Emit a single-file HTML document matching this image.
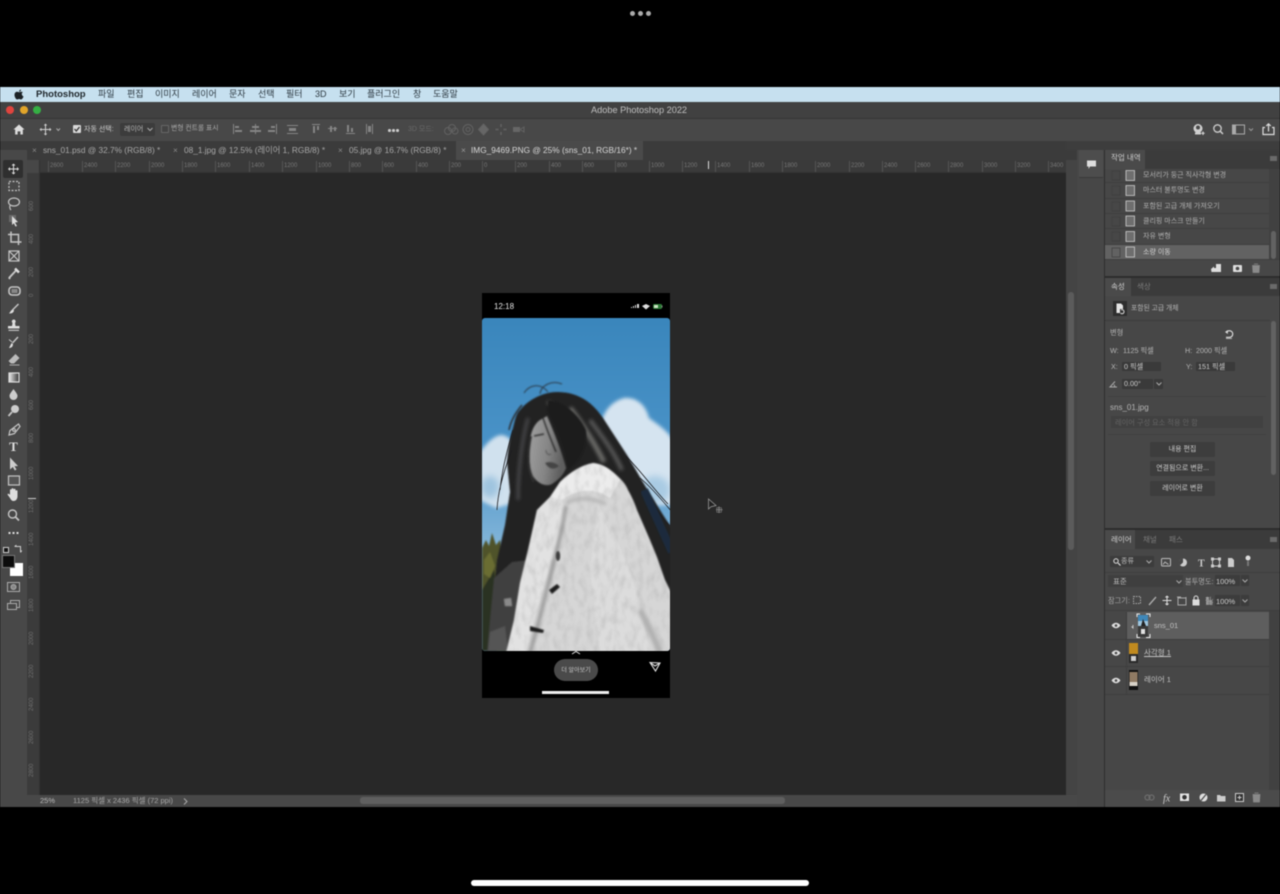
<!DOCTYPE html>
<html lang="ko">
<head>
<meta charset="utf-8">
<title>Adobe Photoshop 2022</title>
<style>
html,body{margin:0;padding:0;background:#000;width:1280px;height:894px;overflow:hidden}
body{font-family:"Liberation Sans","Noto Sans CJK KR",sans-serif;color:#c8c8c8;position:relative}
#app{position:absolute;left:0;top:0;width:1280px;height:894px;filter:blur(.55px)}
.b{position:absolute;display:block}
.t{position:absolute;white-space:nowrap;line-height:1;display:block}
.m{font-size:9px;color:#2e3a42;top:90px}
.tab{font-size:8.3px;color:#a8a8a8;top:146px}
.r{font-size:6px;color:#777;top:163px}
.v{font-size:6px;color:#707070;left:29px;transform:rotate(-90deg);transform-origin:left top}
.tk{position:absolute;top:161px;width:1px;height:11px;background:#545454}
.p{font-size:7.2px;color:#b5b5b5}
.h{font-size:7px;color:#b0b0b0;left:1143px}
.btn{position:absolute;left:1150px;width:65px;height:15px;background:#3d3d3d;color:#ccc;font-size:7px;text-align:center;line-height:15px;border-radius:1px}
.field{position:absolute;background:#3a3a3a;height:9px}
svg{position:absolute;overflow:visible}
</style>
</head>
<body>
<div id="app">

<!-- top dots -->
<span class="b" style="left:629.500px;top:10.500px;width:5px;height:5px;border-radius:50%;background:#aaa"></span>
<span class="b" style="left:637.500px;top:10.500px;width:5px;height:5px;border-radius:50%;background:#aaa"></span>
<span class="b" style="left:645.500px;top:10.500px;width:5px;height:5px;border-radius:50%;background:#aaa"></span>

<!-- menu bar -->
<div class="b" style="left:0;top:87px;width:1280px;height:15px;background:#c6e0ef"></div>
<svg style="left:14px;top:89px" width="10" height="11" viewBox="0 0 10 11"><path d="M7 0.5C6 .6 5 1.500 5.200 2.700 6.300 2.700 7.100 1.700 7 .5ZM5.100 3.200C4.400 3.200 3.900 2.800 3.100 2.800 1.700 2.800.5 4 .5 6 .5 8 2 10.500 3.200 10.500 3.900 10.500 4.300 10 5.100 10 5.900 10 6.200 10.500 7 10.500 8 10.500 9.100 8.800 9.500 7.500 8.400 7 7.800 5.900 7.800 5 7.800 4.200 8.300 3.600 8.900 3.300 8.300 2.900 7.600 2.800 7.100 2.800 6.200 2.800 5.700 3.200 5.100 3.200Z" fill="#1c2226"/></svg>
<span class="t" style="left:36px;top:90px;font-size:9.500px;font-weight:bold;color:#20282d">Photoshop</span>
<span class="t m" style="left:98px">파일</span>
<span class="t m" style="left:127px">편집</span>
<span class="t m" style="left:155px">이미지</span>
<span class="t m" style="left:192px">레이어</span>
<span class="t m" style="left:229px">문자</span>
<span class="t m" style="left:258px">선택</span>
<span class="t m" style="left:286px">필터</span>
<span class="t m" style="left:315px">3D</span>
<span class="t m" style="left:339px">보기</span>
<span class="t m" style="left:367px">플러그인</span>
<span class="t m" style="left:413px">창</span>
<span class="t m" style="left:433px">도움말</span>

<!-- title bar -->
<div class="b" style="left:0;top:102px;width:1280px;height:16px;background:#414141"></div>
<div class="b" style="left:0;top:118px;width:1280px;height:1px;background:#363636"></div>
<span class="b" style="left:6px;top:106px;width:8px;height:8px;border-radius:50%;background:#e0443e"></span>
<span class="b" style="left:19.500px;top:106px;width:8px;height:8px;border-radius:50%;background:#e1a52a"></span>
<span class="b" style="left:33px;top:106px;width:8px;height:8px;border-radius:50%;background:#35b044"></span>
<span class="t" style="left:591px;top:106px;font-size:9.200px;color:#c0c0c0">Adobe Photoshop 2022</span>

<!-- options bar -->
<div class="b" style="left:0;top:119px;width:1280px;height:22px;background:#484848"></div>
<svg style="left:12.500px;top:123.500px" width="12" height="11" viewBox="0 0 13 12"><path d="M6.500 .5L.5 6H2.300V11.500H5V8H8V11.500H10.700V6H12.500Z" fill="#ddd"/></svg>
<svg style="left:39px;top:123px" width="22" height="13" viewBox="0 0 22 13"><path d="M6.500 .5L4.800 2.500H6V6H2.500V4.800L.5 6.500 2.500 8.200V7H6V10.500H4.800L6.500 12.500 8.200 10.500H7V7H10.500V8.200L12.500 6.500 10.500 4.800V6H7V2.500H8.200Z" fill="#d0d0d0"/><path d="M17.500 5.500L19.300 7.500 21 5.500" stroke="#aaa" fill="none"/></svg>
<span class="b" style="left:73px;top:125px;width:8px;height:8px;background:#d8d8d8;border-radius:1px"></span>
<svg style="left:73px;top:125px" width="8" height="8" viewBox="0 0 8 8"><path d="M1.500 4L3.300 6 6.500 2" stroke="#333" stroke-width="1.300" fill="none"/></svg>
<span class="t p" style="left:84px;top:126px;color:#ccc;font-size:7px">자동 선택:</span>
<span class="b" style="left:120px;top:123px;width:35px;height:13px;background:#3c3c3c;border-radius:2px"></span>
<span class="t p" style="left:124px;top:126px;font-size:7px">레이어</span>
<svg style="left:147px;top:127px" width="6" height="5" viewBox="0 0 6 5"><path d="M.5 1L3 3.500 5.500 1" stroke="#aaa" fill="none"/></svg>
<span class="b" style="left:161px;top:125px;width:6px;height:6px;border:1px solid #666;border-radius:1px;background:#434343"></span>
<span class="t p" style="left:171px;top:126px;color:#aaa;font-size:6.800px">변형 컨트롤 표시</span>
<svg style="left:232px;top:124px" width="170" height="11" viewBox="0 0 170 11" fill="#858585">
<rect x="1" y="0" width="1" height="10"/><rect x="3" y="2" width="4" height="2"/><rect x="3" y="6" width="7" height="2"/>
<rect x="23" y="0" width="1" height="10"/><rect x="20" y="2" width="7" height="2"/><rect x="18" y="6" width="11" height="2"/>
<rect x="44" y="0" width="1" height="10"/><rect x="39" y="2" width="4" height="2"/><rect x="36" y="6" width="7" height="2"/>
<rect x="55" y="1" width="11" height="1"/><rect x="57" y="4" width="7" height="3"/><rect x="55" y="9" width="11" height="1"/>
<rect x="80" y="0" width="8" height="1"/><rect x="81" y="2" width="2" height="7"/><rect x="85" y="2" width="2" height="4"/>
<rect x="96" y="4" width="9" height="1"/><rect x="98" y="2" width="2" height="6"/><rect x="102" y="3" width="2" height="4"/>
<rect x="114" y="9" width="9" height="1"/><rect x="115" y="1" width="2" height="7"/><rect x="119" y="4" width="2" height="4"/>
<rect x="134" y="0" width="1" height="10"/><rect x="140" y="0" width="1" height="10"/><rect x="136" y="2" width="3" height="6"/>
</svg>
<span class="b" style="left:388px;top:129px;width:2.500px;height:2.500px;border-radius:50%;background:#ccc"></span>
<span class="b" style="left:392px;top:129px;width:2.500px;height:2.500px;border-radius:50%;background:#ccc"></span>
<span class="b" style="left:396px;top:129px;width:2.500px;height:2.500px;border-radius:50%;background:#ccc"></span>
<span class="t" style="left:408px;top:125.500px;font-size:7px;color:#686868">3D 모드:</span>
<svg style="left:442px;top:123px" width="85" height="13" viewBox="0 0 85 13" fill="none" stroke="#626262">
<circle cx="6" cy="8" r="3.500"/><circle cx="10" cy="5" r="3.500"/><circle cx="13" cy="8" r="3"/>
<circle cx="26" cy="6.500" r="5"/><circle cx="26" cy="6.500" r="2"/>
<path d="M41.500 1L46.500 6.500 41.500 12 36.500 6.500Z" fill="#666"/>
<path d="M59 1V4M59 9V12M53.500 6.500H56.500M61.500 6.500H64.500" stroke-width="1.500"/>
<rect x="71" y="4" width="7" height="5" fill="#666" stroke="none"/><path d="M78 6.500L82 4V9Z"/>
</svg>
<svg style="left:1192px;top:123px" width="85" height="13" viewBox="0 0 85 13" fill="none">
<circle cx="6" cy="5.500" r="4.500" fill="#d0d0d0"/><circle cx="6" cy="4.500" r="2" fill="#484848"/><path d="M3 10.500H9" stroke="#d0d0d0" stroke-width="2"/><path d="M11 8.500V12M9.300 10.300H12.700" stroke="#ddd"/>
<circle cx="25.500" cy="5.500" r="3.700" stroke="#ccc" stroke-width="1.300"/><path d="M28.300 8.300L31 11" stroke="#ccc" stroke-width="1.500"/>
<rect x="40.500" y="2" width="12" height="9" stroke="#aaa"/><rect x="40.500" y="2" width="3.500" height="9" fill="#aaa"/>
<path d="M57 5.500L59 7.500 61 5.500" stroke="#999"/>
<path d="M73 4.500H71V11.500H82V4.500H80M76.500 8.500V.8M74.200 3L76.500 .8 78.800 3" stroke="#ddd" stroke-width="1.200"/>
</svg>

<!-- tab bar -->
<div class="b" style="left:0;top:141px;width:1280px;height:19px;background:#3b3b3b"></div>
<div class="b" style="left:1066px;top:141px;width:39px;height:9px;background:#3d3d3d"></div>
<span class="b" style="left:456px;top:141px;width:187px;height:19px;background:#4a4a4a"></span>
<span class="t" style="left:4px;top:143px;font-size:6px;color:#999;letter-spacing:-1px">»</span>
<span class="t" style="left:1095px;top:143px;font-size:7px;color:#aaa;letter-spacing:-1px">«</span>
<span class="t" style="left:1272px;top:143px;font-size:7px;color:#aaa;letter-spacing:-1px">»</span>
<span class="t tab" style="left:32px;color:#888">×</span>
<span class="t tab" style="left:43px">sns_01.psd @ 32.7% (RGB/8) *</span>
<span class="t tab" style="left:173px;color:#888">×</span>
<span class="t tab" style="left:184px">08_1.jpg @ 12.5% (레이어 1, RGB/8) *</span>
<span class="t tab" style="left:338px;color:#888">×</span>
<span class="t tab" style="left:349px">05.jpg @ 16.7% (RGB/8) *</span>
<span class="t tab" style="left:461px;color:#999">×</span>
<span class="t tab" style="left:471px;color:#d8d8d8">IMG_9469.PNG @ 25% (sns_01, RGB/16*) *</span>

<!-- left tool column -->
<div class="b" style="left:0;top:150px;width:27px;height:657px;background:#484848"></div>
<div class="b" style="left:0;top:141px;width:27px;height:9px;background:#3b3b3b"></div>
<span class="b" style="left:3px;top:160px;width:20px;height:18px;background:#2f2f2f;border-radius:2px"></span>

<!-- rulers -->
<div class="b" style="left:27px;top:160px;width:1039px;height:13px;background:#3a3a3a"></div>
<div class="b" style="left:27px;top:160px;width:13px;height:635px;background:#3b3b3b"></div>
<div class="b" style="left:27px;top:160px;width:13px;height:13px;background:#474747"></div>
<div class="b" style="left:39px;top:160px;width:1px;height:635px;background:#333"></div>
<div class="b" style="left:40px;top:172px;width:1026px;height:1px;background:#333"></div>

<!-- canvas -->
<div class="b" style="left:40px;top:173px;width:1026px;height:622px;background:#282828"></div>

<i class="tk" style="left:48px"></i><span class="t r" style="left:50px">2600</span>
<i class="tk" style="left:82px"></i><span class="t r" style="left:84px">2400</span>
<i class="tk" style="left:115px"></i><span class="t r" style="left:117px">2200</span>
<i class="tk" style="left:149px"></i><span class="t r" style="left:151px">2000</span>
<i class="tk" style="left:182px"></i><span class="t r" style="left:184px">1800</span>
<i class="tk" style="left:215px"></i><span class="t r" style="left:217px">1600</span>
<i class="tk" style="left:249px"></i><span class="t r" style="left:251px">1400</span>
<i class="tk" style="left:282px"></i><span class="t r" style="left:284px">1200</span>
<i class="tk" style="left:316px"></i><span class="t r" style="left:318px">1000</span>
<i class="tk" style="left:349px"></i><span class="t r" style="left:351px">800</span>
<i class="tk" style="left:382px"></i><span class="t r" style="left:384px">600</span>
<i class="tk" style="left:416px"></i><span class="t r" style="left:418px">400</span>
<i class="tk" style="left:449px"></i><span class="t r" style="left:451px">200</span>
<i class="tk" style="left:482px"></i><span class="t r" style="left:484px">0</span>
<i class="tk" style="left:515px"></i><span class="t r" style="left:517px">200</span>
<i class="tk" style="left:549px"></i><span class="t r" style="left:551px">400</span>
<i class="tk" style="left:582px"></i><span class="t r" style="left:584px">600</span>
<i class="tk" style="left:615px"></i><span class="t r" style="left:617px">800</span>
<i class="tk" style="left:649px"></i><span class="t r" style="left:651px">1000</span>
<i class="tk" style="left:682px"></i><span class="t r" style="left:684px">1200</span>
<i class="tk" style="left:708px;background:#ddd;top:161px;height:8px"></i>
<i class="tk" style="left:715px"></i><span class="t r" style="left:717px">1400</span>
<i class="tk" style="left:749px"></i><span class="t r" style="left:751px">1600</span>
<i class="tk" style="left:782px"></i><span class="t r" style="left:784px">1800</span>
<i class="tk" style="left:815px"></i><span class="t r" style="left:817px">2000</span>
<i class="tk" style="left:849px"></i><span class="t r" style="left:851px">2200</span>
<i class="tk" style="left:882px"></i><span class="t r" style="left:884px">2400</span>
<i class="tk" style="left:915px"></i><span class="t r" style="left:917px">2600</span>
<i class="tk" style="left:948px"></i><span class="t r" style="left:950px">2800</span>
<i class="tk" style="left:982px"></i><span class="t r" style="left:984px">3000</span>
<i class="tk" style="left:1015px"></i><span class="t r" style="left:1017px">3200</span>
<i class="tk" style="left:1048px"></i><span class="t r" style="left:1050px">3400</span>

<span class="t v" style="top:211px">600</span>
<span class="t v" style="top:244px">400</span>
<span class="t v" style="top:277px">200</span>
<span class="t v" style="top:297px">0</span>
<span class="t v" style="top:344px">200</span>
<span class="t v" style="top:377px">400</span>
<span class="t v" style="top:410px">600</span>
<span class="t v" style="top:443px">800</span>
<span class="t v" style="top:480px">1000</span>
<span class="t v" style="top:513px">1200</span>
<span class="t v" style="top:546px">1400</span>
<span class="t v" style="top:579px">1600</span>
<span class="t v" style="top:612px">1800</span>
<span class="t v" style="top:645px">2000</span>
<span class="t v" style="top:678px">2200</span>
<span class="t v" style="top:711px">2400</span>
<span class="t v" style="top:744px">2600</span>
<span class="t v" style="top:777px">2800</span>
<div class="b" style="left:28px;top:498px;width:8px;height:1px;background:#ccc"></div>

<!-- tool icons -->
<svg style="left:0;top:160px" width="27" height="460" viewBox="0 0 27 460" fill="none" stroke="#c4c4c4" stroke-width="1.200">
<!-- move -->
<path d="M13.500 3.500L11.500 5.500H13V8.500H10V7L8 9 10 11V9.500H13V12.500H11.500L13.500 14.500 15.500 12.500H14V9.500H17V11L19 9 17 7V8.500H14V5.500H15.500Z" fill="#ddd" stroke="none"/>
<!-- marquee -->
<rect x="9" y="21.500" width="10" height="9" stroke-dasharray="2 1.500"/>
<!-- lasso -->
<ellipse cx="14" cy="42" rx="5.500" ry="4"/><path d="M10 45.500C9.500 47.500 10 49 11 50"/>
<!-- object select -->
<rect x="9" y="55" width="7" height="7" fill="#6a6a6a" stroke="none"/><path d="M12 56L18 62 15 62.500 17 66 15.500 66.500 13.800 63.300 12 65Z" fill="#ddd" stroke="none"/>
<!-- crop -->
<path d="M11 71.500V82H21.500M8 74.500H18.500V85" stroke-width="1.500"/>
<!-- frame -->
<rect x="9" y="91" width="10" height="10"/><path d="M9 91L19 101M19 91L9 101"/>
<!-- eyedropper -->
<path d="M9 118L16 110.500M10 117.500L9 119" stroke-width="2"/><path d="M15 108.500L19 112.500" stroke-width="2.500" stroke="#ddd"/>
<!-- healing/patch -->
<rect x="9" y="127" width="11" height="8" rx="3" stroke-width="1.600"/><rect x="11.500" y="129" width="6" height="4" fill="#888" stroke="none"/>
<!-- brush -->
<path d="M18.500 144L12.500 150" stroke-width="1.500"/><path d="M13 149.500C10.500 150 10.500 152 9 153.500 11.500 153.500 13.500 153 14 150.500Z" fill="#ddd" stroke="none"/>
<!-- stamp -->
<path d="M13.500 159.500A2 2 0 0 1 15 163L15.500 166H19.500V168.500H8V166H12L12.500 163A2 2 0 0 1 13.500 159.500Z" fill="#ddd" stroke="none"/><path d="M8.500 170.300H19"/>
<!-- history brush -->
<path d="M18 177L12.500 183" stroke-width="1.500"/><path d="M9 188C11 188 13 187 13 184L11.500 183C10.500 185 10 186 9 188Z" fill="#ddd" stroke="none"/><path d="M9 179.500L12 182" stroke-width="1"/>
<!-- eraser -->
<path d="M15.500 194L19.500 198 14 203.500H11L8.500 201Z" fill="#bbb" stroke="none"/><path d="M9.500 205H19.500" stroke-width=".8"/>
<!-- gradient -->
<defs><linearGradient id="gr"><stop offset="0" stop-color="#eee"/><stop offset="1" stop-color="#333"/></linearGradient></defs>
<rect x="9" y="213" width="10" height="9" fill="url(#gr)" stroke="#ddd"/>
<!-- blur drop -->
<path d="M13.500 229C11 232.500 9.500 234 9.500 236A4 4 0 0 0 17.500 236C17.500 234 16 232.500 13.500 229Z" fill="#ccc" stroke="none"/>
<!-- dodge -->
<circle cx="15" cy="249" r="4" fill="#ccc" stroke="none"/><path d="M12 252L8.500 256" stroke-width="1.800"/>
<!-- pen -->
<path d="M18.500 264L10 270.500C9.500 272 9.500 273 9 275 11 274.500 13 274 14.500 273.500L20 266.500Z"/><circle cx="14" cy="270" r="1.300"/>
<!-- type -->
<text x="13.500" y="291" font-family="Liberation Serif" font-size="13" font-weight="bold" fill="#ddd" stroke="none" text-anchor="middle">T</text>
<!-- path select -->
<path d="M10 297.500L18 306 14.500 306.300 16.500 309.500 14.800 310.500 12.800 307 10 309.500Z" fill="#ccc" stroke="none"/>
<!-- rect shape -->
<rect x="8.500" y="316" width="11" height="9" fill="#555"/>
<!-- hand -->
<path d="M10 338L7.500 334.500C8 333 9.500 334 10 335V330C10 329 11.500 329 11.500 330V329C11.500 328 13.500 328 13.500 329V329.500C13.500 328.500 15.500 328.500 15.500 329.500V331C15.500 330 17.500 330 17.500 331V336C17.500 339 16 341 13.500 341 12 341 11 340 10 338Z" fill="#ddd" stroke="none"/>
<!-- zoom -->
<circle cx="12.500" cy="354" r="4" stroke-width="1.400"/><path d="M15.500 357L19 360.500" stroke-width="1.800"/>
<!-- dots -->
<path d="M8.500 373H10.500M12.500 373H14.500M16.500 373H18.500" stroke-width="2" stroke="#ddd"/>
</svg>
<span class="b" style="left:3px;top:547px;width:4px;height:4px;background:#111;border:1px solid #ccc"></span>
<svg style="left:14px;top:545px" width="8" height="8" viewBox="0 0 8 8" fill="none" stroke="#ccc"><path d="M1 1.500H6.500V7M.5 1.500L2.500 .2M6.500 7.500L7.800 5.500"/></svg>
<span class="b" style="left:10px;top:563px;width:13px;height:13px;background:#fff"></span>
<span class="b" style="left:3px;top:556px;width:11px;height:11px;background:#0c0c0c;outline:1px solid #777"></span>
<svg style="left:7px;top:582px" width="14" height="30" viewBox="0 0 14 30" fill="none" stroke="#aaa"><rect x=".5" y=".5" width="12" height="9"/><circle cx="6.500" cy="5" r="2.500" fill="#888"/><rect x="3.500" y="18.500" width="9" height="7"/><rect x=".5" y="21.500" width="9" height="6" fill="#484848"/></svg>

<!-- phone image -->
<svg style="left:482px;top:293px" width="188" height="405" viewBox="482 293 188 405">
<defs>
<linearGradient id="sky" gradientUnits="userSpaceOnUse" x1="0" y1="318" x2="0" y2="540"><stop offset="0" stop-color="#3a86bc"/><stop offset=".6" stop-color="#4a93c8"/><stop offset="1" stop-color="#7fb3d8"/></linearGradient>
<linearGradient id="fc" x1="0" y1="0" x2="1" y2=".3"><stop offset="0" stop-color="#a2a2a2"/><stop offset=".6" stop-color="#858585"/><stop offset="1" stop-color="#5e5e5e"/></linearGradient>
<clipPath id="pic"><rect x="482" y="318" width="188" height="333" rx="3"/></clipPath>
<filter id="s1" x="-20%" y="-20%" width="140%" height="140%"><feGaussianBlur stdDeviation="1.800"/></filter>
<filter id="s2" x="-10%" y="-10%" width="120%" height="120%"><feGaussianBlur stdDeviation=".7"/></filter>
<filter id="s3" x="-30%" y="-30%" width="160%" height="160%"><feGaussianBlur stdDeviation="3.500"/></filter>
<filter id="fur" x="-5%" y="-5%" width="110%" height="110%"><feTurbulence type="fractalNoise" baseFrequency=".16 .08" numOctaves="3" seed="4" result="n"/><feColorMatrix in="n" type="matrix" values="0 0 0 0 .42 0 0 0 0 .42 0 0 0 0 .42 1 0 0 0 -.42" result="d"/><feComposite in="d" in2="SourceAlpha" operator="in" result="c"/><feMerge result="m"><feMergeNode in="SourceGraphic"/><feMergeNode in="c"/></feMerge><feGaussianBlur in="m" stdDeviation=".7"/></filter>
</defs>
<rect x="482" y="293" width="188" height="405" fill="#000"/>
<g clip-path="url(#pic)">
<rect x="482" y="318" width="188" height="333" fill="url(#sky)"/>
<!-- clouds right -->
<g filter="url(#s1)" fill="#d5e4f0"><path d="M600 425C604 412 610 402 624 398 638 397 646 406 649 418 660 426 672 434 674 444V505H650L600 450Z"/></g>
<g filter="url(#s3)" fill="#a9cbe3"><ellipse cx="655" cy="490" rx="15" ry="14"/></g>
<!-- clouds left -->
<g filter="url(#s1)" fill="#d0e1ee"><path d="M480 452C486 444 494 435 502 435 510 436 518 446 518 460V502L496 508 480 500Z"/></g>
<g filter="url(#s3)" fill="#9fc4df"><ellipse cx="490" cy="487" rx="9" ry="11"/></g>
<!-- trees -->
<g filter="url(#s2)">
<path d="M482 548L486 540 489 546 492 533 496 545 500 540 506 570 508 651H482Z" fill="#4f5229"/>
<path d="M482 590L494 570 500 600 497 651H482Z" fill="#2c3020"/>
<path d="M484 560L490 552 495 566 490 578 484 574Z" fill="#6a6d33"/>
</g>
<!-- hair -->
<g filter="url(#s2)">
<path d="M557 392C575 392 590 399 603 418L627 455C636 470 646 488 654 500 660 510 666 520 672 528V600L655 560 640 520 600 480 560 500 535 560 520 600 495 580 497 560 505 525 510 492 507 462C508 448 510 438 513 428 515 420 516 414 520 410 530 398 545 392 557 392Z" fill="#202022"/>
<path d="M548 392C541 383 530 384 524 393M540 394C541 385 552 380 562 384" stroke="#2b3a48" stroke-width="1" fill="none"/>
<path d="M522 405C516 412 511 420 509 430" stroke="#2a2a2c" stroke-width="1.500" fill="none"/>
</g>
<g filter="url(#s1)" fill="none">
<path d="M548 402C558 408 566 418 570 430" stroke="#8a8a86" stroke-width="3"/>
<path d="M570 408C582 424 594 442 604 462" stroke="#6a6a68" stroke-width="5"/>
<path d="M590 420C600 434 612 448 622 470" stroke="#585858" stroke-width="4"/>
<path d="M528 418C522 440 518 470 518 500" stroke="#4a4a4c" stroke-width="3"/>
</g>
<g fill="none" stroke="#1d1d20" stroke-width=".8">
<path d="M513 430C507 450 502 470 500 490M512 450C504 470 498 490 497 510M626 456C640 470 656 492 668 504M640 478C650 486 662 500 672 512M654 505C660 516 668 524 674 530"/>
</g>
<path d="M644 490C652 508 662 530 672 552" stroke="#1a2a3c" stroke-width="8" fill="none" filter="url(#s2)"/>
<!-- dark inner garment -->
<g filter="url(#s2)">
<path d="M494 578L512 562 530 560 522 620 512 651H487Z" fill="#3f3f3f"/>
<path d="M504 599L511 598 512 606 505 606Z" fill="#8a8a8a"/>
<path d="M490 632L505 626 508 651H488Z" fill="#555"/>
</g>
<!-- face -->
<g filter="url(#s2)">
<path d="M540 420C534 424 531 432 530 440 528 452 529 466 533 476 538 484 546 487 552 484 558 480 563 476 566 468 562 452 554 432 547 416Z" fill="url(#fc)"/>
<path d="M547 412C556 428 566 452 567 470 578 464 588 450 586 430 578 412 560 400 548 400Z" fill="#1c1c1d"/>
<path d="M534 436L544 434" stroke="#262626" stroke-width="1.800"/>
<path d="M545 463C549 461 555 462 559 466 555 470 549 470 545 463Z" fill="#444"/>
<path d="M546 450C546 453 548 456 551 454" stroke="#505050" stroke-width="1" fill="none"/>
<path d="M531 436C527 455 528 472 534 482" stroke="#2e2e2e" stroke-width="2.500" fill="none"/>
<path d="M543 418C547 430 551 440 556 452" stroke="#2e2e2e" stroke-width="1.800" fill="none"/>
</g>
<!-- coat -->
<g filter="url(#fur)">
<path d="M593 463C602 464 608 468 613 472 620 478 626 484 628 490 632 497 635 504 637 510L650 540 657 557 665 580 672 594V653H506L514 620 520 583 528 550 537 510 550 497 560 482C570 472 582 465 593 463Z" fill="#d6d6d6"/>
<path d="M560 482C570 472 582 465 593 463 604 464 612 470 620 480L610 498C596 488 578 488 562 500L550 497Z" fill="#ececec"/>
<path d="M550 497L562 500 566 512 552 560 534 620 526 653H506L514 620 520 583 528 550 537 510Z" fill="#e2e2e2"/>
<path d="M598 505C620 540 640 590 650 653H600L590 570Z" fill="#dcdcdc"/>
</g>
<g filter="url(#s1)" fill="none">
<path d="M566 506C562 530 556 555 548 585 542 610 536 632 530 653" stroke="#808080" stroke-width="2.500"/>
<path d="M566 503C578 497 590 497 606 504" stroke="#b0b0b0" stroke-width="3"/>
<path d="M640 610C648 625 655 640 660 653" stroke="#b0b0b0" stroke-width="6"/>
</g>
<!-- toggles -->
<path d="M549 590L557 584 560 587 552 594Z" fill="#1b1b1b" filter="url(#s2)"/>
<path d="M530 626L544 630 543 633 530 631Z" fill="#1b1b1b" filter="url(#s2)"/>
<ellipse cx="558" cy="556" rx="2.200" ry="5" fill="#3a3a3a" filter="url(#s2)"/>
</g>
<!-- status bar -->
<text x="494" y="309" font-family="Liberation Sans" font-size="8" fill="#e8e8e8">12:18</text>
<path d="M631 308V307H632V308ZM633 308V306H634V308ZM635 308V305H636V308ZM637 308V304H639V308Z" fill="#ddd"/>
<path d="M642 306L646 304 650 306 646 309.500Z" fill="#ddd"/>
<rect x="653" y="304" width="9" height="5" rx="1.200" fill="#2b7a35"/><rect x="654" y="305" width="4" height="3" fill="#cde3c4"/>
<path d="M662 305.500V307.500" stroke="#888"/>
<!-- bottom -->
<path d="M572 654L576 651.500 580 654" stroke="#ddd" stroke-width="1" fill="none"/>
<rect x="554" y="659" width="44" height="22" rx="11" fill="#4a4a4a"/>
<text x="576" y="672" font-family="Liberation Sans,Noto Sans CJK KR" font-size="6" fill="#c8c8c8" text-anchor="middle">더 알아보기</text>
<path d="M650 662.500L660 663 655.500 671Z M650 662.500L655 666 660 663" stroke="#ddd" stroke-width="1.100" fill="none"/>
<rect x="542" y="691" width="67" height="3" fill="#eee"/>
</svg>

<!-- cursor -->
<svg style="left:707px;top:498px" width="18" height="18" viewBox="0 0 18 18"><path d="M1.500 1V11L4 8.700 9 7.500Z" fill="#222" stroke="#999" stroke-width=".8"/><path d="M12 8.500V15M9 11.800H15.500" stroke="#888"/><rect x="9.800" y="9.700" width="4.500" height="4.500" fill="none" stroke="#777" stroke-width=".7"/></svg>

<!-- canvas scrollbars -->
<div class="b" style="left:1066px;top:160px;width:11px;height:635px;background:#444"></div>
<div class="b" style="left:1068px;top:292px;width:6px;height:258px;border-radius:3px;background:#5b5b5b"></div>

<!-- status bar -->
<div class="b" style="left:27px;top:795px;width:1050px;height:12px;background:#484848"></div>
<span class="t" style="left:40px;top:797px;font-size:7.500px;color:#bbb">25%</span>
<span class="t" style="left:73px;top:797px;font-size:7.500px;color:#a8a8a8">1125 픽셀 x 2436 픽셀 (72 ppi)</span>
<svg style="left:183px;top:798px" width="5" height="7" viewBox="0 0 5 7"><path d="M1 .5L4 3.500 1 6.500" stroke="#aaa" fill="none"/></svg>
<div class="b" style="left:360px;top:797px;width:425px;height:7px;border-radius:3px;background:#5f5f5f"></div>

<!-- dock -->
<div class="b" style="left:1077px;top:150px;width:27px;height:657px;background:#474747"></div>
<div class="b" style="left:1077px;top:141px;width:203px;height:9px;background:#3d3d3d"></div>
<div class="b" style="left:1079px;top:150px;width:24px;height:27px;background:#4d4d4d;border-bottom:1px solid #3a3a3a"></div>
<svg style="left:1086px;top:160px" width="11" height="10" viewBox="0 0 11 10"><path d="M1 .5H10V6.500H4L2.500 9V6.500H1Z" fill="#ddd"/></svg>
<div class="b" style="left:1104px;top:150px;width:1px;height:657px;background:#2e2e2e"></div>

<!-- history panel -->
<div class="b" style="left:1105px;top:150px;width:175px;height:126px;background:#474747"></div>
<div class="b" style="left:1105px;top:150px;width:175px;height:19px;background:#3b3b3b"></div>
<div class="b" style="left:1105px;top:150px;width:40px;height:19px;background:#4a4a4a"></div>
<span class="t" style="left:1111px;top:154px;font-size:7.500px;color:#d0d0d0">작업 내역</span>
<span class="b" style="left:1270px;top:156px;width:7px;height:5px;background:#6a6a6a"></span>
<div class="b" style="left:1105px;top:182px;width:164px;height:1px;background:#3f3f3f"></div>
<div class="b" style="left:1105px;top:198px;width:164px;height:1px;background:#3f3f3f"></div>
<div class="b" style="left:1105px;top:213px;width:164px;height:1px;background:#3f3f3f"></div>
<div class="b" style="left:1105px;top:228px;width:164px;height:1px;background:#3f3f3f"></div>
<div class="b" style="left:1105px;top:244px;width:164px;height:1px;background:#3f3f3f"></div>
<div class="b" style="left:1105px;top:245px;width:164px;height:14.500px;background:#626262"></div>
<div class="b" style="left:1105px;top:259px;width:175px;height:1px;background:#3e3e3e"></div>
<div class="b" style="left:1269px;top:169px;width:11px;height:90px;background:#414141"></div>
<div class="b" style="left:1271px;top:231px;width:5px;height:28px;border-radius:3px;background:#626262"></div>
<svg style="left:1112px;top:169px" width="26" height="90" viewBox="0 0 26 90">
<g fill="#6e6e6e" stroke="#cfcfcf" stroke-width=".8">
<path d="M14 1.500H22.500V11.500H14Z"/><path d="M14 16.500H22.500V26.500H14Z"/><path d="M14 32H22.500V42H14Z"/><path d="M14 47H22.500V57H14Z"/><path d="M14 62.500H22.500V72.500H14Z"/><path d="M14 78H22.500V88H14Z"/>
</g>
<g fill="none" stroke="#3d3d3d" stroke-width=".7"><rect x="0" y="2" width="8" height="9"/><rect x="0" y="17" width="8" height="9"/><rect x="0" y="33" width="8" height="9"/><rect x="0" y="48" width="8" height="9"/><rect x="0" y="63" width="8" height="9"/><rect x="0" y="79" width="8" height="9"/></g>
</svg>
<span class="t h" style="top:172px">모서리가 둥근 직사각형 변경</span>
<span class="t h" style="top:187px">마스터 불투명도 변경</span>
<span class="t h" style="top:203px">포함된 고급 개체 가져오기</span>
<span class="t h" style="top:218px">클리핑 마스크 만들기</span>
<span class="t h" style="top:233px">자유 변형</span>
<span class="t h" style="top:249px;color:#d4d4d4">소량 이동</span>
<svg style="left:1210px;top:263px" width="52" height="10" viewBox="0 0 52 10">
<path d="M1 6L4 3.500V5H6V1H11V9H1.500Z" fill="#ddd"/>
<rect x="23" y="2" width="9" height="7" rx="1" fill="#ddd"/><circle cx="27.500" cy="5.500" r="1.800" fill="#474747"/>
<path d="M42.500 2.500H49.500L49 9.500H43ZM44 1H48" fill="#8a8a8a" stroke="#8a8a8a" stroke-width=".7"/>
</svg>

<!-- properties panel -->
<div class="b" style="left:1105px;top:276px;width:175px;height:2px;background:#2d2d2d"></div>
<div class="b" style="left:1105px;top:278px;width:175px;height:18px;background:#3b3b3b"></div>
<div class="b" style="left:1105px;top:278px;width:26px;height:18px;background:#4a4a4a"></div>
<span class="t" style="left:1111px;top:283px;font-size:7.500px;color:#d0d0d0">속성</span>
<span class="t" style="left:1137px;top:283px;font-size:7.500px;color:#7d7d7d">색상</span>
<span class="b" style="left:1270px;top:284px;width:7px;height:5px;background:#6a6a6a"></span>
<div class="b" style="left:1105px;top:296px;width:175px;height:232px;background:#474747"></div>
<span class="b" style="left:1113px;top:301px;width:14px;height:15px;background:#2e2e2e"></span>
<svg style="left:1115px;top:303px" width="10" height="11" viewBox="0 0 10 11"><path d="M1.500 .5H6L8 2.500V6H5V10H1.500Z" fill="#e4e4e4"/><path d="M6 7A2 2 0 1 1 5.500 10" stroke="#ddd" fill="none"/></svg>
<span class="t" style="left:1131px;top:306px;font-size:6.800px;color:#b5b5b5">포함된 고급 개체</span>
<div class="b" style="left:1105px;top:320px;width:165px;height:1px;background:#3c3c3c"></div>
<div class="b" style="left:1271px;top:321px;width:5px;height:154px;border-radius:3px;background:#626262"></div>
<span class="t p" style="left:1110px;top:329px">변형</span>
<svg style="left:1224px;top:329px" width="10" height="10" viewBox="0 0 10 10"><path d="M2.500 3.500A3.300 3.300 0 1 1 5 8.300H2" stroke="#ddd" stroke-width="1.200" fill="none"/><path d="M1 3L3.800 1V5Z" fill="#ddd"/><path d="M2 9.500H8" stroke="#ddd" stroke-width=".7"/></svg>
<span class="t p" style="left:1110px;top:347px">W:</span><span class="t p" style="left:1123px;top:347px">1125 픽셀</span>
<span class="t p" style="left:1185px;top:347px">H:</span><span class="t p" style="left:1196px;top:347px">2000 픽셀</span>
<span class="field" style="left:1122px;top:362px;width:39px"></span>
<span class="field" style="left:1196px;top:362px;width:39px"></span>
<span class="t p" style="left:1111px;top:363px">X:</span><span class="t p" style="left:1124px;top:363px;color:#ccc">0 픽셀</span>
<span class="t p" style="left:1186px;top:363px">Y:</span><span class="t p" style="left:1198px;top:363px;color:#ccc">151 픽셀</span>
<svg style="left:1109px;top:380px" width="9" height="8" viewBox="0 0 9 8"><path d="M8 7H1L6 1.500M5 4.500L6 7" stroke="#aaa" fill="none"/></svg>
<span class="field" style="left:1122px;top:379px;width:31px;height:10px"></span>
<span class="t p" style="left:1124px;top:380px;color:#ccc">0.00°</span>
<span class="field" style="left:1154px;top:379px;width:9px;height:10px"></span>
<svg style="left:1156px;top:382px" width="6" height="4" viewBox="0 0 6 4"><path d="M.5 .5L3 3 5.500 .5" stroke="#aaa" fill="none"/></svg>
<div class="b" style="left:1108px;top:396px;width:158px;height:1px;background:#404040"></div>
<span class="t p" style="left:1110px;top:404px;font-size:8px">sns_01.jpg</span>
<span class="b" style="left:1111px;top:416px;width:152px;height:12px;background:#414141"></span>
<span class="t p" style="left:1115px;top:418.500px;color:#646464">레이어 구성 요소 적용 안 함</span>
<div class="b" style="left:1108px;top:434px;width:158px;height:1px;background:#404040"></div>
<span class="btn" style="top:442px">내용 편집</span>
<span class="btn" style="top:461px">연결됨으로 변환...</span>
<span class="btn" style="top:481px">레이어로 변환</span>

<!-- layers panel -->
<div class="b" style="left:1105px;top:528px;width:175px;height:2px;background:#2d2d2d"></div>
<div class="b" style="left:1105px;top:530px;width:175px;height:19px;background:#3b3b3b"></div>
<div class="b" style="left:1105px;top:530px;width:30px;height:19px;background:#4a4a4a"></div>
<span class="t" style="left:1111px;top:536px;font-size:7.500px;color:#d0d0d0">레이어</span>
<span class="t" style="left:1143px;top:536px;font-size:7.500px;color:#7d7d7d">채널</span>
<span class="t" style="left:1169px;top:536px;font-size:7.500px;color:#7d7d7d">패스</span>
<span class="b" style="left:1270px;top:537px;width:7px;height:5px;background:#6a6a6a"></span>
<div class="b" style="left:1105px;top:549px;width:175px;height:241px;background:#474747"></div>
<span class="b" style="left:1110px;top:556px;width:44px;height:11px;background:#3c3c3c"></span>
<svg style="left:1113px;top:558px" width="8" height="8" viewBox="0 0 8 8"><circle cx="3" cy="3" r="2.200" stroke="#ddd" fill="none"/><path d="M5 5L7.500 7.500" stroke="#ddd" stroke-width="1.200"/></svg>
<span class="t" style="left:1121px;top:558px;font-size:7px;color:#bbb">종류</span>
<svg style="left:1146px;top:560px" width="6" height="4" viewBox="0 0 6 4"><path d="M.5 .5L3 3 5.500 .5" stroke="#aaa" fill="none"/></svg>
<svg style="left:1161px;top:555px" width="95" height="14" viewBox="0 0 95 14">
<rect x=".5" y="3.500" width="9" height="7.500" rx="1" fill="none" stroke="#bbb"/><path d="M2 9.500L4 7 7.500 9.500" stroke="#bbb" fill="none"/>
<circle cx="22" cy="7.500" r="4" fill="#ccc"/><path d="M22 7.500V3.500A4 4 0 0 0 19 10.300Z" fill="#474747"/>
<text x="37" y="11.500" font-family="Liberation Serif" font-size="10" font-weight="bold" fill="#ccc">T</text>
<rect x="51.500" y="4" width="7" height="7" fill="none" stroke="#ccc"/><path d="M50 2.500H53V5.500H50ZM57 2.500H60V5.500H57ZM50 9.500H53V12.500H50ZM57 9.500H60V12.500H57Z" fill="#ccc"/>
<path d="M67 3H71L73 5V12H67Z" fill="#ccc"/>
<circle cx="87" cy="3" r="2.500" fill="#ddd"/><rect x="86" y="6" width="2" height="5" fill="#777"/>
</svg>
<div class="b" style="left:1105px;top:572px;width:175px;height:1px;background:#3e3e3e"></div>
<span class="b" style="left:1108px;top:575px;width:75px;height:12px;background:#3f3f3f"></span>
<span class="t" style="left:1113px;top:578px;font-size:7.500px;color:#bbb">표준</span>
<svg style="left:1176px;top:580px" width="6" height="4" viewBox="0 0 6 4"><path d="M.5 .5L3 3 5.500 .5" stroke="#aaa" fill="none"/></svg>
<span class="t" style="left:1185px;top:578px;font-size:7.200px;color:#a8a8a8">불투명도:</span>
<span class="b" style="left:1215px;top:575px;width:25px;height:11px;background:#3c3c3c"></span>
<span class="t" style="left:1216px;top:578px;font-size:7.500px;color:#ccc">100%</span>
<span class="b" style="left:1241px;top:575px;width:8px;height:11px;background:#3c3c3c"></span>
<svg style="left:1242px;top:579px" width="6" height="4" viewBox="0 0 6 4"><path d="M.5 .5L3 3 5.500 .5" stroke="#aaa" fill="none"/></svg>
<span class="t" style="left:1108px;top:597px;font-size:7.200px;color:#a8a8a8">잠그기:</span>
<svg style="left:1133px;top:594px" width="80" height="13" viewBox="0 0 80 13" fill="none" stroke="#aaa">
<rect x=".5" y="2.500" width="7" height="7" stroke-dasharray="1.500 1"/>
<path d="M16 11L23 3" stroke-width="1.400"/>
<path d="M34 2V11M29.500 6.500H38.500M34 2L32.500 3.500M34 2L35.500 3.500M34 11L32.500 9.500M34 11L35.500 9.500" stroke="#ddd"/>
<rect x="45" y="4" width="8" height="7"/><path d="M44 3H48M53 3V5"/>
<rect x="59.500" y="5.500" width="7" height="6" fill="#ddd" stroke="none"/><path d="M61 6V4A2 2 0 0 1 65 4V6" stroke="#ddd"/>
<path d="M73 3H76V11H73ZM76.500 6H79.500V11H76.500Z" fill="#888" stroke="none"/>
</svg>
<span class="t" style="left:1205px;top:597px;font-size:7.200px;color:#a8a8a8">칠:</span>
<span class="b" style="left:1215px;top:595px;width:25px;height:11px;background:#3c3c3c"></span>
<span class="t" style="left:1216px;top:598px;font-size:7.500px;color:#ccc">100%</span>
<span class="b" style="left:1241px;top:595px;width:8px;height:11px;background:#3c3c3c"></span>
<svg style="left:1242px;top:599px" width="6" height="4" viewBox="0 0 6 4"><path d="M.5 .5L3 3 5.500 .5" stroke="#aaa" fill="none"/></svg>
<div class="b" style="left:1105px;top:610px;width:175px;height:1px;background:#3e3e3e"></div>

<!-- layer rows -->
<div class="b" style="left:1126px;top:612px;width:143px;height:27px;background:#5e5e5e"></div>
<div class="b" style="left:1105px;top:639px;width:164px;height:1px;background:#3e3e3e"></div>
<div class="b" style="left:1105px;top:666px;width:164px;height:1px;background:#3e3e3e"></div>
<div class="b" style="left:1105px;top:694px;width:164px;height:1px;background:#3e3e3e"></div>
<div class="b" style="left:1126px;top:612px;width:1px;height:82px;background:#3e3e3e"></div>
<svg style="left:1111px;top:622px" width="10" height="62" viewBox="0 0 10 62" fill="#ddd">
<path d="M.5 3.500C2 1.500 3.500 .8 5 .8S8 1.500 9.500 3.500C8 5.500 6.500 6.300 5 6.300S2 5.500 .5 3.500Z"/><circle cx="5" cy="3.500" r="1.300" fill="#474747"/>
<path d="M.5 31C2 29 3.500 28.300 5 28.300S8 29 9.500 31C8 33 6.500 33.800 5 33.800S2 33 .5 31Z"/><circle cx="5" cy="31" r="1.300" fill="#474747"/>
<path d="M.5 58.500C2 56.500 3.500 55.800 5 55.800S8 56.500 9.500 58.500C8 60.500 6.500 61.300 5 61.300S2 60.500 .5 58.500Z"/><circle cx="5" cy="58.500" r="1.300" fill="#474747"/>
</svg>
<svg style="left:1132px;top:612px" width="20" height="27" viewBox="0 0 20 27">
<path d="M1 13V16L-.5 14.500" stroke="#ddd" stroke-width=".8" fill="none"/>
<rect x="6" y="3" width="10" height="11" fill="#3f87b8"/><rect x="6" y="9" width="10" height="5" fill="#9fc5dd"/><path d="M9 14L11 7 14 14Z" fill="#222"/>
<rect x="6" y="14" width="10" height="11" fill="#3a3a3a"/><path d="M9 17H13V22H9Z" fill="#e0e0e0"/>
<path d="M5 5V2H8M14 2H18V5M5 22V25.500H8M14 25.500H18V22" stroke="#eee" fill="none"/>
</svg>
<span class="t" style="left:1154px;top:622px;font-size:7.500px;color:#c4c4c4">sns_01</span>
<svg style="left:1128px;top:642px" width="12" height="22" viewBox="0 0 12 22"><rect x="1" y="1" width="9" height="11" fill="#c08a1f"/><rect x="1" y="12" width="9" height="9" fill="#2a2a2a"/><rect x="3" y="14" width="5" height="5" fill="#cfcfcf"/></svg>
<span class="t" style="left:1144px;top:649px;font-size:7.500px;color:#c4c4c4;text-decoration:underline">사각형 1</span>
<svg style="left:1128px;top:669px" width="12" height="22" viewBox="0 0 12 22"><rect x="1" y="1" width="9" height="20" fill="#111"/><rect x="1.500" y="3" width="8" height="14" fill="#8f7a63"/><rect x="1.500" y="13" width="8" height="4" fill="#d8d2c8"/></svg>
<span class="t" style="left:1144px;top:676px;font-size:7.500px;color:#c4c4c4">레이어 1</span>

<div class="b" style="left:1269px;top:611px;width:11px;height:179px;background:#414141"></div>

<!-- layers bottom bar -->
<div class="b" style="left:1105px;top:790px;width:175px;height:17px;background:#4b4b4b"></div>
<svg style="left:1144px;top:792px" width="122" height="12" viewBox="0 0 122 12">
<circle cx="3.500" cy="5.500" r="2.500" fill="none" stroke="#6d6d6d" stroke-width="1.200"/><circle cx="7.500" cy="5.500" r="2.500" fill="none" stroke="#6d6d6d" stroke-width="1.200"/>
<text x="19" y="9.500" font-family="Liberation Serif" font-size="10" font-style="italic" fill="#ccc">fx</text>
<rect x="36" y="1.500" width="9" height="7.500" fill="#e4e4e4"/><circle cx="40.500" cy="5.300" r="2.300" fill="#333"/>
<circle cx="59.500" cy="5.500" r="4" fill="#ddd"/><path d="M57 8.500L62 2.500" stroke="#444" stroke-width="1.200"/>
<path d="M73 3H76L77 4H81.500V9.500H73Z" fill="#ccc"/>
<rect x="91.500" y="1.500" width="8" height="8" fill="#333" stroke="#ccc"/><path d="M95.500 3.500V7.500M93.500 5.500H97.500" stroke="#ccc"/>
<path d="M109 2.500H116L115.500 10H109.500ZM110.500 1H114.500" fill="#8a8a8a" stroke="#8a8a8a" stroke-width=".7"/>
</svg>

<!-- home indicator -->
<div class="b" style="left:471px;top:880px;width:338px;height:6px;border-radius:3px;background:#fff"></div>

</div>
</body>
</html>
